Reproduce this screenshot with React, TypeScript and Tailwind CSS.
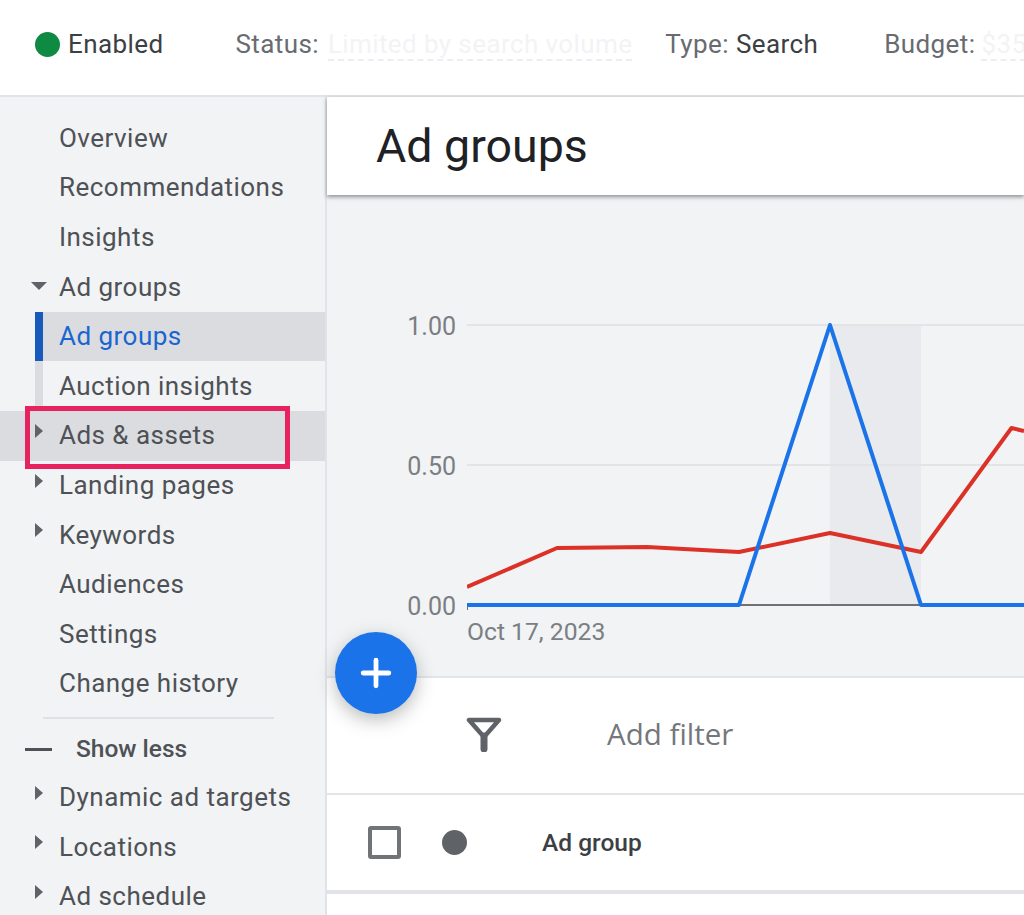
import { Plus } from "lucide-react";

const TOP_ROWS = ["Overview", "Recommendations", "Insights"];
const LOWER_ROWS = [
  { label: "Landing pages", caret: true },
  { label: "Keywords", caret: true },
  { label: "Audiences", caret: false },
  { label: "Settings", caret: false },
  { label: "Change history", caret: false },
];
const MORE_ROWS = ["Dynamic ad targets", "Locations", "Ad schedule"];

const RED_LINE = "0,267 90,228 180,227 272,232 363,213 454,232 544.5,108 557,111";
const BLUE_LINE = "0,285 272,285 363,5 454,285 557,285";

function CaretRight() {
  return (
    <svg width="8" height="14" viewBox="0 0 8 14" className="absolute left-[35px] top-[13px]">
      <path d="M0 0 L8 7 L0 14 Z" fill="#5f6368" />
    </svg>
  );
}

function NavRow({ label, caret }: { label: string; caret?: boolean }) {
  return (
    <div className="relative h-[49.6px] flex items-center pl-[59px] text-[26px] tracking-[0.47px] text-[#4e5155]">
      {caret && <CaretRight />}
      {label}
    </div>
  );
}

function Sidebar() {
  return (
    <aside className="relative w-[327px] shrink-0 bg-[#f1f3f5] border-r-2 border-[#e2e3e8] pt-[16.5px]">
      {TOP_ROWS.map((r) => (
        <NavRow key={r} label={r} />
      ))}
      <div className="relative h-[49.6px] flex items-center pl-[59px] text-[26px] tracking-[0.47px] text-[#4e5155]">
        <svg width="16" height="8" viewBox="0 0 16 8" className="absolute left-[31px] top-[20px]">
          <path d="M0 0 H16 L8 8 Z" fill="#5f6368" />
        </svg>
        Ad groups
      </div>
      <div className="ml-[35px] h-[49.6px] flex items-center border-l-8 border-[#185abc] bg-[#dadce0] pl-[16px] text-[26px] tracking-[0.47px] text-[#1a66d0]">
        Ad groups
      </div>
      <div className="ml-[35px] h-[49.6px] flex items-center border-l-8 border-[#dadce0] pl-[16px] text-[26px] tracking-[0.47px] text-[#4e5155]">
        Auction insights
      </div>
      <div className="relative bg-[#dadce0]">
        <NavRow label="Ads & assets" caret />
        <div className="absolute left-[25px] top-[-5px] w-[265px] h-[63px] border-[5px] border-[#e8215f]" />
      </div>
      {LOWER_ROWS.map((r) => (
        <NavRow key={r.label} label={r.label} caret={r.caret} />
      ))}
      <div className="mt-2 ml-[43px] w-[231px] h-[2px] bg-[#dfe1e5]" />
      <div className="h-[48px] mt-[7px] mb-[-1px] flex items-center pl-[25px] text-[24.5px] font-medium text-[#4e5155]">
        <span className="w-[27px] h-[3px] bg-[#4e5155] mr-6" />
        Show less
      </div>
      {MORE_ROWS.map((r) => (
        <NavRow key={r} label={r} caret />
      ))}
    </aside>
  );
}

function Chart() {
  return (
    <section className="h-[481px] bg-[#f1f3f5] flex items-start pt-[118px]">
      <div className="w-[140px] h-[308px] pr-[11px] flex flex-col justify-between items-end text-[25px] leading-[28px] text-[#7b7e82]">
        <span>1.00</span>
        <span>0.50</span>
        <span>0.00</span>
      </div>
      <div className="flex-1">
        <svg width="557" height="290" viewBox="0 0 557 290" className="mt-[7px] block">
          <rect x="363" y="5" width="91" height="280" fill="#e8eaed" />
          <line x1="0" y1="5" x2="557" y2="5" stroke="#e2e4e6" strokeWidth="2" />
          <line x1="0" y1="145" x2="557" y2="145" stroke="#e2e4e6" strokeWidth="2" />
          <line x1="0" y1="285" x2="557" y2="285" stroke="#6f7174" strokeWidth="2" />
          <line x1="0.5" y1="285" x2="0.5" y2="290" stroke="#6f7174" strokeWidth="1" />
          <polyline points={RED_LINE} fill="none" stroke="#dc3127" strokeWidth="4" strokeLinejoin="round" />
          <polyline points={BLUE_LINE} fill="none" stroke="#1a73e8" strokeWidth="4" strokeLinejoin="round" />
        </svg>
        <div className="mt-[8px] text-[24.7px] leading-[28px] text-[#7b7e82]">Oct 17, 2023</div>
      </div>
    </section>
  );
}

export default function App() {
  return (
    <div className="relative w-[1024px] h-[915px] overflow-hidden bg-white font-['Roboto',sans-serif] flex flex-col">
      <header className="h-[97px] shrink-0 border-b-2 border-[#e2e3e8] flex items-center pb-[6px] text-[26px] tracking-[0.4px] whitespace-nowrap">
        <span className="ml-[35px] w-[25px] h-[25px] shrink-0 rounded-full bg-[#0e8a43]" />
        <span className="ml-[8px] text-[#3c4043]">Enabled</span>
        <span className="ml-[72px] text-[#686b70]">Status:</span>
        <span className="ml-[9px] text-[#f3f3f6] border-b-2 border-dashed border-[#eeeef2] leading-[30px]">
          Limited by search volume
        </span>
        <span className="ml-[33px] text-[#686b70]">Type:</span>
        <span className="ml-[7px] text-[#3c4043]">Search</span>
        <span className="ml-[66px] text-[#686b70]">Budget:</span>
        <span className="ml-[6px] text-[#f3f3f6] border-b-2 border-dashed border-[#eeeef2] leading-[30px]">
          $35
        </span>
      </header>
      <div className="flex flex-1 min-h-0">
        <Sidebar />
        <main className="relative flex-1 min-w-0 flex flex-col">
          <div className="relative z-10 h-[98px] shrink-0 bg-white flex items-center pl-[49px] pt-[2px] text-[46.5px] text-[#202124] shadow-[0_2px_4px_rgba(60,64,67,0.55)]">
            Ad groups
          </div>
          <Chart />
          <div className="h-[119px] shrink-0 border-t-2 border-[#e4e5e9] border-b-2 flex items-center pb-[4px]">
            <svg width="36" height="36" viewBox="0 0 36 36" className="ml-[139px]">
              <path d="M3 4 H33 L18 21 Z" fill="none" stroke="#5f6368" strokeWidth="4.5" strokeLinejoin="round" />
              <path d="M18 20 V33" stroke="#5f6368" strokeWidth="7" strokeLinecap="round" />
            </svg>
            <span className="ml-[105px] text-[29.5px] translate-y-[1px] font-['Open_Sans',sans-serif] font-medium text-[#74777b]">Add filter</span>
          </div>
          <div className="h-[99px] shrink-0 border-b-4 border-[#e2e3e8] flex items-center">
            <span className="ml-[41px] w-[33px] h-[33px] rounded-[3px] border-[4px] border-[#717477]" />
            <span className="ml-[41px] w-[25px] h-[25px] rounded-full bg-[#5f6368]" />
            <span className="ml-[75px] text-[24.5px] translate-y-[1px] font-medium text-[#3c4043]">Ad group</span>
          </div>
          <div className="absolute left-[8px] top-[535px] z-20 w-[82px] h-[82px] rounded-full bg-[#1a73e8] flex items-center justify-center text-white shadow-[0_6px_18px_rgba(60,64,67,0.35)]">
            <Plus size={44} strokeWidth={2.6} />
          </div>
        </main>
      </div>
    </div>
  );
}
